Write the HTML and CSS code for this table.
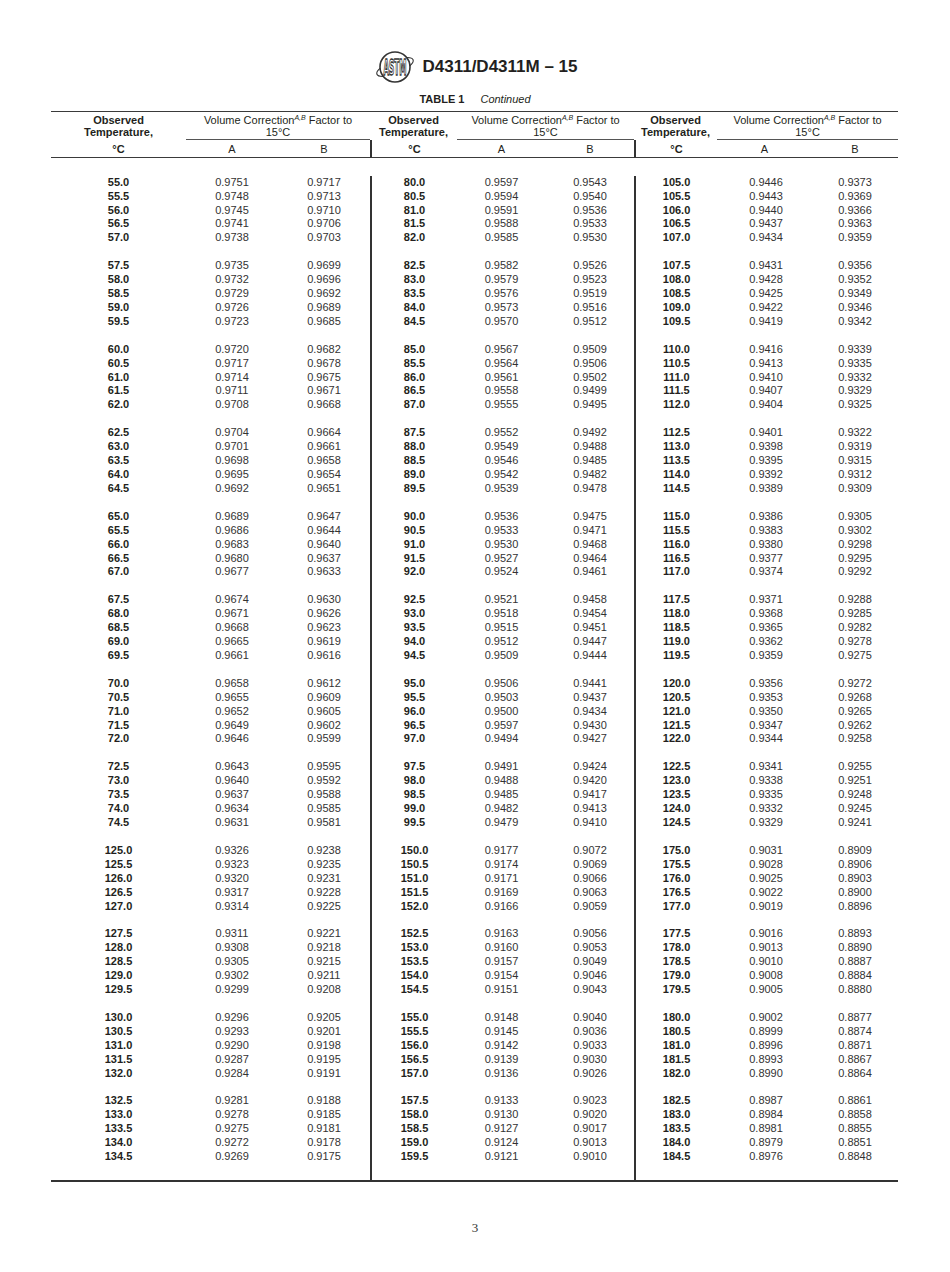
FILE: index.html
```html
<!DOCTYPE html>
<html lang="en">
<head>
<meta charset="utf-8">
<title>D4311/D4311M – 15 Table 1 Continued</title>
<link rel="stylesheet" href="styles.css">
</head>
<body>
<div class="page">
  <div class="doc-head">
    <svg class="logo" viewBox="0 0 40 36" aria-label="ASTM">
      <ellipse cx="20" cy="18" rx="19.5" ry="6.5" transform="rotate(-22 20 18)" fill="none" stroke="#333" stroke-width="1.1"/>
      <circle cx="20" cy="18" r="15" fill="#fff" stroke="#333" stroke-width="1.6"/>
      <g transform="translate(20 18) scale(1 2)">
        <text x="0" y="4" text-anchor="middle" font-family="DejaVu Sans Condensed, Liberation Sans Narrow, sans-serif" font-weight="bold" font-size="11" textLength="23" lengthAdjust="spacingAndGlyphs" fill="#fff" stroke="#333" stroke-width="0.8">ASTM</text>
      </g>
    </svg>
    <div class="doc-title">D4311/D4311M – 15</div>
  </div>
  <div class="caption"><b>TABLE 1</b><i>Continued</i></div>

  <table class="vcf">
    <colgroup>
      <col class="c1t"><col class="c1a"><col class="c1b">
      <col class="c2t"><col class="c2a"><col class="c2b">
      <col class="c3t"><col class="c3a"><col class="c3b">
    </colgroup>
    <thead>
      <tr class="h1">
        <th class="t">Observed<br>Temperature,</th>
        <th class="v" colspan="2">Volume Correction<sup>A,B</sup> Factor to<br>15°C</th>
        <th class="t">Observed<br>Temperature,</th>
        <th class="v" colspan="2">Volume Correction<sup>A,B</sup> Factor to<br>15°C</th>
        <th class="t">Observed<br>Temperature,</th>
        <th class="v" colspan="2">Volume Correction<sup>A,B</sup> Factor to<br>15°C</th>
      </tr>
      <tr class="h2">
        <th class="t">°C</th><th>A</th><th>B</th>
        <th class="t sep">°C</th><th>A</th><th>B</th>
        <th class="t sep">°C</th><th>A</th><th>B</th>
      </tr>
    </thead>
    <tbody>
      <tr class="sp-top"><td colspan="9"></td></tr>

      <tr><td>55.0</td><td>0.9751</td><td>0.9717</td><td>80.0</td><td>0.9597</td><td>0.9543</td><td>105.0</td><td>0.9446</td><td>0.9373</td></tr>
      <tr><td>55.5</td><td>0.9748</td><td>0.9713</td><td>80.5</td><td>0.9594</td><td>0.9540</td><td>105.5</td><td>0.9443</td><td>0.9369</td></tr>
      <tr><td>56.0</td><td>0.9745</td><td>0.9710</td><td>81.0</td><td>0.9591</td><td>0.9536</td><td>106.0</td><td>0.9440</td><td>0.9366</td></tr>
      <tr><td>56.5</td><td>0.9741</td><td>0.9706</td><td>81.5</td><td>0.9588</td><td>0.9533</td><td>106.5</td><td>0.9437</td><td>0.9363</td></tr>
      <tr><td>57.0</td><td>0.9738</td><td>0.9703</td><td>82.0</td><td>0.9585</td><td>0.9530</td><td>107.0</td><td>0.9434</td><td>0.9359</td></tr>
      <tr class="gap"><td></td><td></td><td></td><td></td><td></td><td></td><td></td><td></td><td></td></tr>

      <tr><td>57.5</td><td>0.9735</td><td>0.9699</td><td>82.5</td><td>0.9582</td><td>0.9526</td><td>107.5</td><td>0.9431</td><td>0.9356</td></tr>
      <tr><td>58.0</td><td>0.9732</td><td>0.9696</td><td>83.0</td><td>0.9579</td><td>0.9523</td><td>108.0</td><td>0.9428</td><td>0.9352</td></tr>
      <tr><td>58.5</td><td>0.9729</td><td>0.9692</td><td>83.5</td><td>0.9576</td><td>0.9519</td><td>108.5</td><td>0.9425</td><td>0.9349</td></tr>
      <tr><td>59.0</td><td>0.9726</td><td>0.9689</td><td>84.0</td><td>0.9573</td><td>0.9516</td><td>109.0</td><td>0.9422</td><td>0.9346</td></tr>
      <tr><td>59.5</td><td>0.9723</td><td>0.9685</td><td>84.5</td><td>0.9570</td><td>0.9512</td><td>109.5</td><td>0.9419</td><td>0.9342</td></tr>
      <tr class="gap"><td></td><td></td><td></td><td></td><td></td><td></td><td></td><td></td><td></td></tr>

      <tr><td>60.0</td><td>0.9720</td><td>0.9682</td><td>85.0</td><td>0.9567</td><td>0.9509</td><td>110.0</td><td>0.9416</td><td>0.9339</td></tr>
      <tr><td>60.5</td><td>0.9717</td><td>0.9678</td><td>85.5</td><td>0.9564</td><td>0.9506</td><td>110.5</td><td>0.9413</td><td>0.9335</td></tr>
      <tr><td>61.0</td><td>0.9714</td><td>0.9675</td><td>86.0</td><td>0.9561</td><td>0.9502</td><td>111.0</td><td>0.9410</td><td>0.9332</td></tr>
      <tr><td>61.5</td><td>0.9711</td><td>0.9671</td><td>86.5</td><td>0.9558</td><td>0.9499</td><td>111.5</td><td>0.9407</td><td>0.9329</td></tr>
      <tr><td>62.0</td><td>0.9708</td><td>0.9668</td><td>87.0</td><td>0.9555</td><td>0.9495</td><td>112.0</td><td>0.9404</td><td>0.9325</td></tr>
      <tr class="gap"><td></td><td></td><td></td><td></td><td></td><td></td><td></td><td></td><td></td></tr>

      <tr><td>62.5</td><td>0.9704</td><td>0.9664</td><td>87.5</td><td>0.9552</td><td>0.9492</td><td>112.5</td><td>0.9401</td><td>0.9322</td></tr>
      <tr><td>63.0</td><td>0.9701</td><td>0.9661</td><td>88.0</td><td>0.9549</td><td>0.9488</td><td>113.0</td><td>0.9398</td><td>0.9319</td></tr>
      <tr><td>63.5</td><td>0.9698</td><td>0.9658</td><td>88.5</td><td>0.9546</td><td>0.9485</td><td>113.5</td><td>0.9395</td><td>0.9315</td></tr>
      <tr><td>64.0</td><td>0.9695</td><td>0.9654</td><td>89.0</td><td>0.9542</td><td>0.9482</td><td>114.0</td><td>0.9392</td><td>0.9312</td></tr>
      <tr><td>64.5</td><td>0.9692</td><td>0.9651</td><td>89.5</td><td>0.9539</td><td>0.9478</td><td>114.5</td><td>0.9389</td><td>0.9309</td></tr>
      <tr class="gap"><td></td><td></td><td></td><td></td><td></td><td></td><td></td><td></td><td></td></tr>

      <tr><td>65.0</td><td>0.9689</td><td>0.9647</td><td>90.0</td><td>0.9536</td><td>0.9475</td><td>115.0</td><td>0.9386</td><td>0.9305</td></tr>
      <tr><td>65.5</td><td>0.9686</td><td>0.9644</td><td>90.5</td><td>0.9533</td><td>0.9471</td><td>115.5</td><td>0.9383</td><td>0.9302</td></tr>
      <tr><td>66.0</td><td>0.9683</td><td>0.9640</td><td>91.0</td><td>0.9530</td><td>0.9468</td><td>116.0</td><td>0.9380</td><td>0.9298</td></tr>
      <tr><td>66.5</td><td>0.9680</td><td>0.9637</td><td>91.5</td><td>0.9527</td><td>0.9464</td><td>116.5</td><td>0.9377</td><td>0.9295</td></tr>
      <tr><td>67.0</td><td>0.9677</td><td>0.9633</td><td>92.0</td><td>0.9524</td><td>0.9461</td><td>117.0</td><td>0.9374</td><td>0.9292</td></tr>
      <tr class="gap"><td></td><td></td><td></td><td></td><td></td><td></td><td></td><td></td><td></td></tr>

      <tr><td>67.5</td><td>0.9674</td><td>0.9630</td><td>92.5</td><td>0.9521</td><td>0.9458</td><td>117.5</td><td>0.9371</td><td>0.9288</td></tr>
      <tr><td>68.0</td><td>0.9671</td><td>0.9626</td><td>93.0</td><td>0.9518</td><td>0.9454</td><td>118.0</td><td>0.9368</td><td>0.9285</td></tr>
      <tr><td>68.5</td><td>0.9668</td><td>0.9623</td><td>93.5</td><td>0.9515</td><td>0.9451</td><td>118.5</td><td>0.9365</td><td>0.9282</td></tr>
      <tr><td>69.0</td><td>0.9665</td><td>0.9619</td><td>94.0</td><td>0.9512</td><td>0.9447</td><td>119.0</td><td>0.9362</td><td>0.9278</td></tr>
      <tr><td>69.5</td><td>0.9661</td><td>0.9616</td><td>94.5</td><td>0.9509</td><td>0.9444</td><td>119.5</td><td>0.9359</td><td>0.9275</td></tr>
      <tr class="gap"><td></td><td></td><td></td><td></td><td></td><td></td><td></td><td></td><td></td></tr>

      <tr><td>70.0</td><td>0.9658</td><td>0.9612</td><td>95.0</td><td>0.9506</td><td>0.9441</td><td>120.0</td><td>0.9356</td><td>0.9272</td></tr>
      <tr><td>70.5</td><td>0.9655</td><td>0.9609</td><td>95.5</td><td>0.9503</td><td>0.9437</td><td>120.5</td><td>0.9353</td><td>0.9268</td></tr>
      <tr><td>71.0</td><td>0.9652</td><td>0.9605</td><td>96.0</td><td>0.9500</td><td>0.9434</td><td>121.0</td><td>0.9350</td><td>0.9265</td></tr>
      <tr><td>71.5</td><td>0.9649</td><td>0.9602</td><td>96.5</td><td>0.9597</td><td>0.9430</td><td>121.5</td><td>0.9347</td><td>0.9262</td></tr>
      <tr><td>72.0</td><td>0.9646</td><td>0.9599</td><td>97.0</td><td>0.9494</td><td>0.9427</td><td>122.0</td><td>0.9344</td><td>0.9258</td></tr>
      <tr class="gap"><td></td><td></td><td></td><td></td><td></td><td></td><td></td><td></td><td></td></tr>

      <tr><td>72.5</td><td>0.9643</td><td>0.9595</td><td>97.5</td><td>0.9491</td><td>0.9424</td><td>122.5</td><td>0.9341</td><td>0.9255</td></tr>
      <tr><td>73.0</td><td>0.9640</td><td>0.9592</td><td>98.0</td><td>0.9488</td><td>0.9420</td><td>123.0</td><td>0.9338</td><td>0.9251</td></tr>
      <tr><td>73.5</td><td>0.9637</td><td>0.9588</td><td>98.5</td><td>0.9485</td><td>0.9417</td><td>123.5</td><td>0.9335</td><td>0.9248</td></tr>
      <tr><td>74.0</td><td>0.9634</td><td>0.9585</td><td>99.0</td><td>0.9482</td><td>0.9413</td><td>124.0</td><td>0.9332</td><td>0.9245</td></tr>
      <tr><td>74.5</td><td>0.9631</td><td>0.9581</td><td>99.5</td><td>0.9479</td><td>0.9410</td><td>124.5</td><td>0.9329</td><td>0.9241</td></tr>
      <tr class="gap"><td></td><td></td><td></td><td></td><td></td><td></td><td></td><td></td><td></td></tr>

      <tr><td>125.0</td><td>0.9326</td><td>0.9238</td><td>150.0</td><td>0.9177</td><td>0.9072</td><td>175.0</td><td>0.9031</td><td>0.8909</td></tr>
      <tr><td>125.5</td><td>0.9323</td><td>0.9235</td><td>150.5</td><td>0.9174</td><td>0.9069</td><td>175.5</td><td>0.9028</td><td>0.8906</td></tr>
      <tr><td>126.0</td><td>0.9320</td><td>0.9231</td><td>151.0</td><td>0.9171</td><td>0.9066</td><td>176.0</td><td>0.9025</td><td>0.8903</td></tr>
      <tr><td>126.5</td><td>0.9317</td><td>0.9228</td><td>151.5</td><td>0.9169</td><td>0.9063</td><td>176.5</td><td>0.9022</td><td>0.8900</td></tr>
      <tr><td>127.0</td><td>0.9314</td><td>0.9225</td><td>152.0</td><td>0.9166</td><td>0.9059</td><td>177.0</td><td>0.9019</td><td>0.8896</td></tr>
      <tr class="gap"><td></td><td></td><td></td><td></td><td></td><td></td><td></td><td></td><td></td></tr>

      <tr><td>127.5</td><td>0.9311</td><td>0.9221</td><td>152.5</td><td>0.9163</td><td>0.9056</td><td>177.5</td><td>0.9016</td><td>0.8893</td></tr>
      <tr><td>128.0</td><td>0.9308</td><td>0.9218</td><td>153.0</td><td>0.9160</td><td>0.9053</td><td>178.0</td><td>0.9013</td><td>0.8890</td></tr>
      <tr><td>128.5</td><td>0.9305</td><td>0.9215</td><td>153.5</td><td>0.9157</td><td>0.9049</td><td>178.5</td><td>0.9010</td><td>0.8887</td></tr>
      <tr><td>129.0</td><td>0.9302</td><td>0.9211</td><td>154.0</td><td>0.9154</td><td>0.9046</td><td>179.0</td><td>0.9008</td><td>0.8884</td></tr>
      <tr><td>129.5</td><td>0.9299</td><td>0.9208</td><td>154.5</td><td>0.9151</td><td>0.9043</td><td>179.5</td><td>0.9005</td><td>0.8880</td></tr>
      <tr class="gap"><td></td><td></td><td></td><td></td><td></td><td></td><td></td><td></td><td></td></tr>

      <tr><td>130.0</td><td>0.9296</td><td>0.9205</td><td>155.0</td><td>0.9148</td><td>0.9040</td><td>180.0</td><td>0.9002</td><td>0.8877</td></tr>
      <tr><td>130.5</td><td>0.9293</td><td>0.9201</td><td>155.5</td><td>0.9145</td><td>0.9036</td><td>180.5</td><td>0.8999</td><td>0.8874</td></tr>
      <tr><td>131.0</td><td>0.9290</td><td>0.9198</td><td>156.0</td><td>0.9142</td><td>0.9033</td><td>181.0</td><td>0.8996</td><td>0.8871</td></tr>
      <tr><td>131.5</td><td>0.9287</td><td>0.9195</td><td>156.5</td><td>0.9139</td><td>0.9030</td><td>181.5</td><td>0.8993</td><td>0.8867</td></tr>
      <tr><td>132.0</td><td>0.9284</td><td>0.9191</td><td>157.0</td><td>0.9136</td><td>0.9026</td><td>182.0</td><td>0.8990</td><td>0.8864</td></tr>
      <tr class="gap"><td></td><td></td><td></td><td></td><td></td><td></td><td></td><td></td><td></td></tr>

      <tr><td>132.5</td><td>0.9281</td><td>0.9188</td><td>157.5</td><td>0.9133</td><td>0.9023</td><td>182.5</td><td>0.8987</td><td>0.8861</td></tr>
      <tr><td>133.0</td><td>0.9278</td><td>0.9185</td><td>158.0</td><td>0.9130</td><td>0.9020</td><td>183.0</td><td>0.8984</td><td>0.8858</td></tr>
      <tr><td>133.5</td><td>0.9275</td><td>0.9181</td><td>158.5</td><td>0.9127</td><td>0.9017</td><td>183.5</td><td>0.8981</td><td>0.8855</td></tr>
      <tr><td>134.0</td><td>0.9272</td><td>0.9178</td><td>159.0</td><td>0.9124</td><td>0.9013</td><td>184.0</td><td>0.8979</td><td>0.8851</td></tr>
      <tr><td>134.5</td><td>0.9269</td><td>0.9175</td><td>159.5</td><td>0.9121</td><td>0.9010</td><td>184.5</td><td>0.8976</td><td>0.8848</td></tr>

      <tr class="sp-bot"><td></td><td></td><td></td><td></td><td></td><td></td><td></td><td></td><td></td></tr>
    </tbody>
  </table>

  <div class="page-num">3</div>
</div>
</body>
</html>
```

FILE: styles.css
```css
* { box-sizing: border-box; }

body {
  margin: 0;
  background: #fff;
  color: #231f20;
  font-family: "Liberation Sans", Arial, sans-serif;
}

.page {
  width: 950px;
  padding-top: 50px;
}

.doc-head {
  display: flex;
  justify-content: center;
  align-items: center;
  gap: 7px;
  height: 34px;
  padding-left: 3px;
}

.logo {
  width: 40px;
  height: 36px;
  display: block;
}

.doc-title {
  font-size: 17px;
  font-weight: bold;
  line-height: 20px;
}

.caption {
  margin-top: 8px;
  text-align: center;
  font-size: 11px;
  line-height: 14px;
}

.caption b { margin-right: 16px; }

/* ---------- table ---------- */
.vcf {
  margin: 5px 0 0 51px;
  width: 847px;
  table-layout: fixed;
  border-collapse: separate;
  border-spacing: 0;
  font-size: 11px;
}

.c1t { width: 135px; }
.c1a { width: 92px; }
.c1b { width: 92px; }
.c2t { width: 87px; }
.c2a { width: 89px; }
.c2b { width: 88px; }
.c3t { width: 83px; }
.c3a { width: 95px; }
.c3b { width: 86px; }

.vcf th {
  padding: 0;
  font-weight: normal;
  text-align: center;
  vertical-align: top;
  white-space: nowrap;
}

.vcf .h1 th {
  border-top: 1px solid #3a3a3a;
  padding-top: 3px;
  line-height: 11.5px;
}

.vcf .h1 th.t {
  font-weight: bold;
  padding-bottom: 2px;
}

.vcf .h1 th.v {
  border-bottom: 1px solid #555;
  padding-bottom: 1px;
}

.vcf sup {
  font-size: 7px;
  font-style: italic;
  line-height: 0;
  vertical-align: 4px;
}

.vcf .h2 th {
  border-bottom: 1px solid #3a3a3a;
  padding-top: 2px;
  line-height: 15px;
}

.vcf .h2 th.t { font-weight: bold; }

.vcf .h2 th.sep { border-left: 2px solid #333; }

.vcf tbody tr { height: 13.92px; }

.vcf td {
  padding: 0;
  line-height: 13.92px;
  text-align: center;
  white-space: nowrap;
  color: #333;
}

.vcf td:nth-child(3n+1) {
  font-weight: bold;
  color: #231f20;
}

.vcf td:nth-child(8) { padding-left: 3px; }

.vcf tbody tr td:nth-child(4),
.vcf tbody tr td:nth-child(7) {
  border-left: 2px solid #333;
}

.vcf tbody tr.sp-top { height: 17.7px; }
.vcf tbody tr.sp-top td { border-left: none; }

.vcf tbody tr.sp-bot { height: 18px; }
.vcf tbody tr.sp-bot td { border-bottom: 2px solid #333; }

.page-num {
  margin-top: 38px;
  text-align: center;
  font-family: "Liberation Serif", "Times New Roman", serif;
  font-size: 13px;
  line-height: 15px;
  color: #333;
}
```
